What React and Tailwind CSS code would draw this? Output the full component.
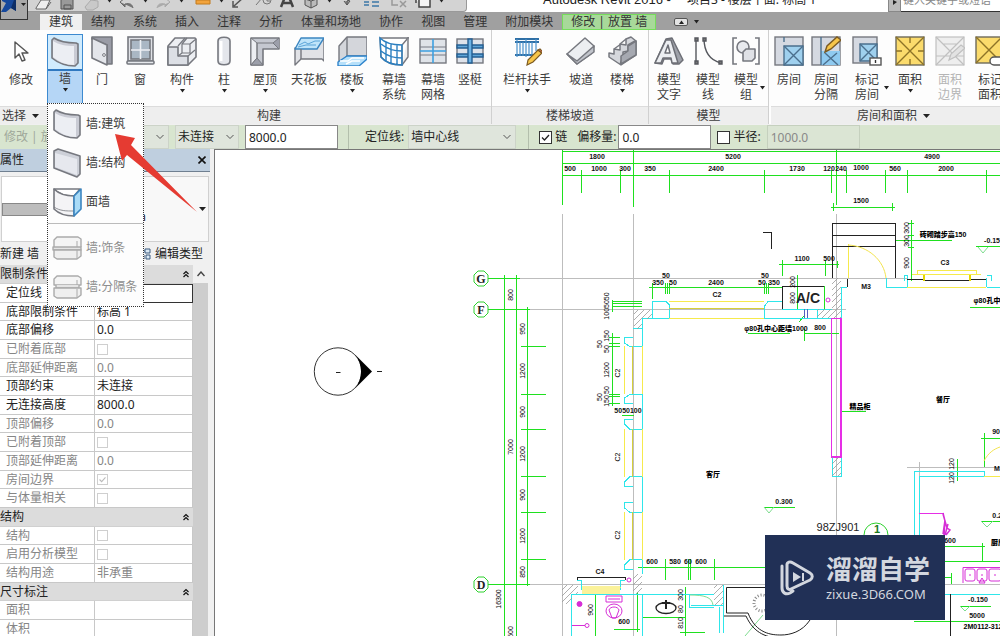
import React from "react";

const G = "#76787f";

const icons = {
  cursor: (
    <path d="M9 6v16l4-4 3 7 3-1-3-7h6z" fill="#fff" stroke="#555" strokeWidth="1.4" strokeLinejoin="round" />
  ),
  wall: (
    <g stroke={G} strokeWidth="1.6" strokeLinejoin="round">
      <path d="M2 3l2-2c6 4 12 5 22 5l2 1v19l-3 3c-9 0-17-3-23-8z" fill="#c9cbd4" />
      <path d="M3 4c6 4 13 5 21 5v19C16 28 9 25 3 20z" fill="#eceef3" stroke="none" />
    </g>
  ),
  wallFlat: (
    <g stroke={G} strokeWidth="1.6" strokeLinejoin="round">
      <path d="M2 3l4-2 22 7v18l-3 3-23-9z" fill="#cdd0d8" />
      <path d="M3 5l22 6v16L3 19z" fill="#e6e8ee" stroke="none" />
    </g>
  ),
  wallFace: (
    <g stroke={G} strokeWidth="1.6" strokeLinejoin="round">
      <path d="M2 2h26l-6 7C14 9 6 7 2 2z" fill="#fff" />
      <path d="M2 2c5 5 12 7 20 7v20c-9 0-15-2-20-7z" fill="#f4f4f6" />
      <path d="M2 20c6 4 12 4 20 4" fill="none" strokeWidth="0.8" />
      <path d="M22 9l7-7v20l-7 7z" fill="#a9dbf7" stroke="#3b85c0" />
    </g>
  ),
  sweep: (
    <g stroke="#aaa" strokeWidth="1.4" strokeLinejoin="round">
      <path d="M2 14V7l3-3h21l3 2v8" fill="#f4f4f4" />
      <path d="M1 14h28v3H1z" fill="#e4e4e4" />
      <path d="M2 17h27v6l-4 3H5l-3-2z" fill="#efefef" />
      <path d="M25 8v6M25 17v9" fill="none" strokeWidth="1" />
    </g>
  ),
  reveal: (
    <g stroke="#aaa" strokeWidth="1.4" strokeLinejoin="round">
      <path d="M2 13V7l3-3h21l3 2v7H2z" fill="#f4f4f4" />
      <path d="M4 13v3h23v-3" fill="#e4e4e4" />
      <path d="M2 16h27v7l-4 3H5l-3-2z" fill="#efefef" />
      <path d="M25 8v5M25 17v9" fill="none" strokeWidth="1" />
    </g>
  ),
  door: (
    <g stroke={G} strokeWidth="1.6" strokeLinejoin="round">
      <path d="M5 1h20v27h-5V9L5 3z" fill="#9a9ca6" />
      <path d="M5 2l15 7v20L5 22z" fill="#e3e5ea" />
      <circle cx="17" cy="19" r="1.4" fill="#fff" strokeWidth="1" />
    </g>
  ),
  window: (
    <g stroke={G} strokeWidth="1.6">
      <rect x="3" y="1" width="25" height="24" fill="#dfe1e6" />
      <rect x="6" y="4" width="19" height="19" fill="#aab7c4" />
      <path d="M15.500 4v19M6 14h19" stroke="#eef0f4" />
      <rect x="2" y="25" width="27" height="3" rx="1" fill="#e6e8ec" />
    </g>
  ),
  component: (
    <g stroke={G} strokeWidth="1.6" strokeLinejoin="round">
      <path d="M1 10L8 2h20l1 1v18l-8 8H1z" fill="#eceef2" />
      <path d="M1 11h10v9h10v9H1z" fill="#dcdfe5" />
      <path d="M11 10l7-8M11 20l4-3V8h8v9h-8M15 8l5-6M23 8l6-5M21 20l7-6" fill="none" strokeWidth="1.200" />
    </g>
  ),
  column: (
    <g stroke={G} strokeWidth="1.600">
      <path d="M9 5c0-5 12-5 12 0v20c0 5-12 5-12 0z" fill="#e4e6eb" />
      <path d="M12 5v20" stroke="#fff" strokeWidth="3" />
    </g>
  ),
  roof: (
    <g stroke={G} strokeWidth="1.600" strokeLinejoin="round">
      <path d="M1 2h28v11H13v16H1z" fill="#c5c8d0" />
      <path d="M1 2l6 5v15l-6 7z" fill="#eceef2" strokeWidth="1" />
      <path d="M7 22l6 7H1zM7 7h16M29 2l-6 5 6 6M7 7v15" fill="#9c9faa" strokeWidth="1" />
    </g>
  ),
  ceiling: (
    <g stroke={G} strokeWidth="1.400" strokeLinejoin="round">
      <path d="M1 12v17l6-6h21l2 2V3z" fill="#e1e2e6" />
      <path d="M7 2h23l-7 11H1z" fill="#bfe4fa" stroke="#3b85c0" />
      <path d="M5 9l6-3 3 2 7-3h5M4 11l8-2h10" fill="none" stroke="#5ba4d8" strokeWidth="1" />
      <path d="M7 13v10" />
    </g>
  ),
  floor: (
    <g stroke={G} strokeWidth="1.400" strokeLinejoin="round">
      <path d="M2 10l8-9h20v19H10L2 28z" fill="#d4d6db" />
      <path d="M10 1v19" />
      <path d="M10 20h20v3l-8 7H1v-4z" fill="#b6e0fa" stroke="#2f84cc" />
      <path d="M3 25h8l4-3h12M9 28l6-3h8" fill="none" stroke="#fff" />
    </g>
  ),
  curtainSystem: (
    <g strokeWidth="1.400">
      <path d="M1 2h28L23 9v20C14 29 6 26 2 21z" fill="#fff" stroke={G} />
      <path d="M29 1v20l-6 8" fill="#eee" stroke={G} />
      <path d="M1 2c5 5 13 7 22 7v20C14 29 6 26 2 21zM2 8c6 5 13 7 21 7M2 15c6 5 13 7 21 7M7 6v19M12 8v19M18 9v20" fill="none" stroke="#2b7fc0" />
    </g>
  ),
  curtainGrid: (
    <g strokeWidth="1.400">
      <rect x="2" y="3" width="26" height="24" fill="#dfe3e8" stroke={G} />
      <path d="M2 11h26M2 19h26" stroke="#777b84" strokeWidth="1" />
      <path d="M15 3v24M2 15h26" stroke="#3ea0e0" strokeWidth="1.600" />
    </g>
  ),
  mullion: (
    <g strokeWidth="1.400">
      <rect x="2" y="3" width="26" height="24" fill="#dde2ea" stroke={G} />
      <path d="M2 9h26v3H2zM2 18h26v3H2z" fill="#5fa6d8" stroke="#245f92" />
      <path d="M13 3h4v24h-4z" fill="#6cb2e4" stroke="#245f92" />
    </g>
  ),
  railing: (
    <g strokeWidth="1.200">
      <path d="M3 3h24M3 6h24M3 19h19" stroke="#2f6fa5" strokeWidth="2" />
      <path d="M5 3v18M8 6v14M11 6v14M14 3v18M17 6v14M20 6v14M24 3v12" stroke="#4a92cc" />
      <path d="M16 24l10-10 4 3-9 9-6 3z" fill="#f7c64a" stroke="#7b5a22" />
      <path d="M26 14l2-1 3 3-1 1z" fill="#e06a5a" stroke="#7b5a22" />
    </g>
  ),
  ramp: (
    <g stroke={G} strokeWidth="1.500" strokeLinejoin="round">
      <path d="M1 18L19 2l9 8-3 8-14 10z" fill="#eceef1" />
      <path d="M1 18l10 7L28 10v6L11 28z" fill="#c1c4cb" />
    </g>
  ),
  stair: (
    <g stroke={G} strokeWidth="1.500" strokeLinejoin="round">
      <path d="M2 17l5 1v-5l6 1V8l6 1V3l5-2 5 4v14L14 29 2 21z" fill="#d5d7dc" />
      <path d="M13 28l3-7 0-5 5-1v-6l7-4M7 13l7-5M13 8l6-5" fill="none" />
      <path d="M14 28V20l7-5v-5l8-5v14z" fill="#a6a9b1" />
    </g>
  ),
  modelText: (
    <g stroke="#6d6f76" strokeWidth="1.500" strokeLinejoin="round">
      <path d="M1 27L12 3l6-1 11 22-4 4h-6l-2-5h-7l-2 5z" fill="#9ea1a9" />
      <path d="M1 27L12 4h5l7 23h-6l-1-5H9l-2 5z" fill="#eceef1" />
      <path d="M11 17h5l-2-8z" fill="#fff" />
    </g>
  ),
  modelLine: (
    <g stroke="#55575d" strokeWidth="1.400" fill="none">
      <path d="M3 3v24M11 2c0 14 5 22 17 25" />
      <path d="M2 2h3v3H2zM2 25h3v3H2zM10 2h3v3h-3zM26 25h3v3h-3z" fill="#777" />
    </g>
  ),
  modelGroup: (
    <g stroke={G} strokeWidth="1.600">
      <path d="M6 2H2v26h4M24 2h4v26h-4" fill="none" />
      <circle cx="12" cy="11" r="6" fill="#e8eaee" />
      <path d="M12 16l3-3h9v9l-3 3h-9z" fill="#dfe1e6" strokeLinejoin="round" />
    </g>
  ),
  room: (
    <g strokeWidth="1.400">
      <rect x="1" y="1" width="28" height="28" fill="#d5d9e1" stroke={G} />
      <path d="M10 10h19v19H10z" fill="#9fd0ee" stroke="#4b6f8d" />
      <path d="M10 10l19 19M29 10L10 29M10 1v5" stroke="#4b6f8d" />
    </g>
  ),
  roomSeparator: (
    <g strokeWidth="1.400">
      <rect x="1" y="1" width="28" height="28" fill="#d5d9e1" stroke={G} />
      <path d="M10 15h19v14H10z" fill="#8fcaf0" />
      <path d="M10 1v28M12 29l14-12M14 17l13 12" stroke="#4b6f8d" />
      <path d="M14 16l2-6L26 1l4 3-10 9z" fill="#f7c64a" stroke="#7b5a22" />
    </g>
  ),
  roomTag: (
    <g strokeWidth="1.400">
      <rect x="1" y="1" width="24" height="26" fill="#d5d9e1" stroke={G} />
      <path d="M8 8h17v17H8z" fill="#9fd0ee" stroke="#4b6f8d" />
      <path d="M8 8l17 17M25 8L8 25" stroke="#4b6f8d" />
      <rect x="18" y="22" width="11" height="7" fill="#fff" stroke="#555" />
      <path d="M23.500 24v3" stroke="#333" />
    </g>
  ),
  area: (
    <g strokeWidth="1.400" stroke="#8d7327">
      <rect x="1" y="1" width="28" height="28" fill="#fbdb6c" stroke="#6d6a5a" />
      <path d="M1 1l28 28M29 1L1 29M15 1v6M1 15h6M15 29v-6M29 15h-6" />
    </g>
  ),
  areaBoundary: (
    <g strokeWidth="1.200" stroke="#c0c0c0">
      <rect x="1" y="1" width="28" height="28" fill="#eee" />
      <path d="M1 1l28 28M29 1L1 29M8 8h14M1 20h28" />
      <path d="M14 24l2-6 10-9 4 3-10 9z" fill="#e2e2e2" />
    </g>
  ),
  areaTag: (
    <g strokeWidth="1.400" stroke="#8d7327">
      <rect x="1" y="1" width="26" height="26" fill="#fbdb6c" stroke="#6d6a5a" />
      <path d="M1 1l26 26M27 1L1 27" />
      <rect x="15" y="21" width="14" height="8" rx="4" fill="#fff" stroke="#555" />
    </g>
  ),
};

function Icon({ name }) {
  return (
    <svg className="block h-[30px] w-[30px] shrink-0" viewBox="0 0 30 30" fill="none" aria-hidden="true">
      {icons[name]}
    </svg>
  );
}

function Caret({ className = "" }) {
  return (
    <svg className={"block h-1 w-[5px] " + className} viewBox="0 0 5 4" aria-hidden="true">
      <path d="M0 0h5L2.500 3.500z" fill="#222" />
    </svg>
  );
}

function RibbonButton({ icon, lines, width, caret, disabled, side }) {
  return (
    <button
      type="button"
      disabled={disabled}
      className={"relative flex shrink-0 flex-col items-center pt-1.5 " + width + (disabled ? " text-[#b5b5b5]" : " text-[#3c3c3c]")}
    >
      <Icon name={icon} />
      <span className="mt-1.5 flex flex-col items-center leading-[15px] whitespace-nowrap">
        {lines.map((l) => (
          <span key={l}>{l}</span>
        ))}
      </span>
      {caret && <Caret className="mt-0.5" />}
      {side && <Caret className="absolute right-0 bottom-4" />}
    </button>
  );
}

function Panel({ title, children, className = "", arrow }) {
  return (
    <section className={"flex shrink-0 flex-col border-r border-[#d0d0d0] " + className}>
      <div className="flex h-[76px] bg-[#fdfdfd]">{children}</div>
      <h2 className="flex h-[18px] items-center justify-center gap-1.5 border-t border-[#dcdcdc] bg-[#eeeeee] text-[#3c3c3c]">
        {title}
        {arrow && (
          <svg className="h-1 w-[7px]" viewBox="0 0 7 4" aria-hidden="true">
            <path d="M0 0h7L3.500 4z" fill="#222" />
          </svg>
        )}
      </h2>
    </section>
  );
}

function MenuItem({ icon, label, disabled }) {
  return (
    <button
      type="button"
      role="menuitem"
      disabled={disabled}
      className={"flex h-[39px] w-full items-center gap-1 pl-1 text-left whitespace-nowrap " + (disabled ? "text-[#8d8d8d]" : "text-[#3c3c3c]")}
    >
      <Icon name={icon} />
      {label}
    </button>
  );
}

function WallButton() {
  return (
    <div className="relative mt-1 h-[70px] w-9 shrink-0">
      <button type="button" aria-haspopup="menu" aria-expanded="true" className="flex h-full w-full flex-col items-center border border-[#3c8ad0] bg-[#b5d6f6] text-[#3c3c3c]">
        <span className="flex h-9 w-full shrink-0 items-center justify-center border-b-2 border-[#2f78c0] bg-[#d0ebfd]">
          <Icon name="wall" />
        </span>
        <span className="leading-[15px]">墙</span>
        <Caret className="mt-0.5" />
      </button>
      <div role="menu" className="absolute top-[69px] left-0 z-20 w-[97px] border border-dotted border-[#333] bg-[#fdfdfd]">
        <MenuItem icon="wall" label="墙:建筑" />
        <MenuItem icon="wallFlat" label="墙:结构" />
        <MenuItem icon="wallFace" label="面墙" />
        <div className="mb-1 border-b border-[#bbb] pt-0.5" />
        <MenuItem icon="sweep" label="墙:饰条" disabled />
        <MenuItem icon="reveal" label="墙:分隔条" disabled />
      </div>
      <svg className="absolute top-[98px] left-[66px] z-30 h-20 w-[86px]" viewBox="0 0 86 80" aria-hidden="true">
        <path d="M2 2l20 4-4 7 66 67L14 23l-5 6z" fill="#e53b32" />
      </svg>
    </div>
  );
}

const quick = [
  ["打开", <path key="a" d="M2 9l5-8h9l-4 9H2zM12 10l5-7" fill="#eee" stroke="#666" />],
  ["保存", <path key="a" d="M3 0h12v10H3zM6 6h7v4H6z" fill="#9a9a9a" stroke="#555" />],
  ["同步", <path key="a" d="M3 8l6-7 7 1v6l-5 3H5z" fill="#c9c9c9" stroke="#aaa" />],
  "caret",
  ["放弃", <path key="a" d="M2 3l5 5V5c5-1 7 0 8 4M2 3l5-4" fill="#777" stroke="#666" />],
  "caret",
  ["重做", <path key="a" d="M16 3l-5 5V5C6 4 4 5 3 9M16 3l-5-4" fill="#aaa" stroke="#aaa" />],
  "caret",
  "gap",
  ["测量", <path key="a" d="M2 1h14v4H2z" fill="#f2a33c" stroke="#c27a1c" />],
  "caret",
  ["尺寸标注", <path key="a" d="M4 7L14-2M3 2v6h5" fill="none" stroke="#555" strokeWidth="1.500" />],
  ["标记", <path key="a" d="M2 6l6-7M13-3a4 4 0 1 1 0 8 4 4 0 1 1 0-8M13-1v3h3" fill="none" stroke="#777" />],
  ["文字", <path key="a" d="M3 8L9-7l6 15M5 4h8" fill="none" stroke="#444" strokeWidth="2.500" />],
  ["三维视图", <path key="a" d="M3 0l6 2 6-2v6l-6 3-6-3zM9 2v7" fill="#bbb" stroke="#555" />],
  "caret",
  ["剖面", <path key="a" d="M9-6a4 4 0 1 1 0 8M9 2v4M6 2l3 4 3-4" fill="#999" stroke="#555" />],
  ["细线", <path key="a" d="M2 0h5M2 6h5M10-1h7M10 3h7M10 7h7M2 3h5" fill="none" stroke="#3c78a8" strokeWidth="1.500" />],
  "gap",
  ["关闭隐藏窗口", <path key="a" d="M2-2v8h6M10 2l6 6M16 2l-6 6" fill="none" stroke="#999" strokeWidth="1.500" />],
  ["切换窗口", <path key="a" d="M5 0h11v8H5zM2 4V-1h4" fill="#f4f4f4" stroke="#444" strokeWidth="1.500" />],
  "caret",
];

const tabs = ["建筑", "结构", "系统", "插入", "注释", "分析", "体量和场地", "协作", "视图", "管理", "附加模块"];

function Header() {
  return (
    <header className="relative shrink-0">
      <div className="flex h-3 items-end overflow-hidden bg-white">
        <div className="flex h-3 w-[467px] shrink-0 items-end overflow-hidden rounded-br border-r border-b border-[#999] bg-[#d3d3d3] pl-[31px]">
          {quick.map((q, i) =>
            q === "caret" ? (
              <span key={i} className="flex h-3 w-3 items-start justify-center">
                <Caret />
              </span>
            ) : q === "gap" ? (
              <span key={i} className="w-1" />
            ) : (
              <button key={i} type="button" aria-label={q[0]} className="flex h-3 w-6 items-end justify-center">
                <svg className="h-3 w-[18px]" viewBox="0 0 18 12">{q[1]}</svg>
              </button>
            )
          )}
        </div>
        <div className="flex flex-1 justify-start gap-4 overflow-hidden pl-[76px] leading-6 whitespace-pre text-[#222]">
          <span className="font-['Liberation_Sans',sans-serif] text-[13px]">Autodesk Revit 2016 -</span>
          <span>项目3 - 楼层平面: 标高 1</span>
        </div>
        <button type="button" aria-label="展开搜索" className="flex h-3 w-[13px] shrink-0 items-start justify-center border border-t-0 border-[#888] bg-[#bbb]">
          <svg className="h-1.5 w-1.5" viewBox="0 0 6 6"><path d="M1 0l4 2-4 3z" fill="#222" /></svg>
        </button>
        <div className="flex h-3 w-[99px] shrink-0 items-end overflow-hidden border-b border-[#333] bg-white">
          <input aria-label="搜索" placeholder="键入关键字或短语" className="h-6 w-full bg-transparent px-0.5 text-[11px] text-[#888] placeholder:text-[#888]" />
        </div>
      </div>
      <nav className="flex h-[18px] items-end bg-[#a0a0a0] pl-10 text-[#333]">
        {tabs.map((t, i) => (
          <button key={t} type="button" className={"h-4 shrink-0 px-[9px] leading-4 whitespace-nowrap " + (i === 0 ? "bg-[#f0f0f0]" : "")}>
            {t}
          </button>
        ))}
        <button type="button" className="h-4 shrink-0 border border-[#76dd5c] bg-[#a8d99a] px-2 leading-3.5 whitespace-pre">
          修改 | 放置 墙
        </button>
        <button type="button" aria-label="最小化功能区" className="mb-1 ml-[18px] flex items-center gap-1.5">
          <span className="flex h-2 w-3.5 items-center justify-center rounded-xs border border-[#555] bg-[#e4e4e4]">
            <Caret className="rotate-180" />
          </span>
          <Caret />
        </button>
      </nav>
      <button type="button" aria-label="应用程序菜单" className="absolute top-0 left-0 z-10 flex h-5 w-7 items-start border border-t-0 border-[#333] bg-[#a9a9a9]">
        <svg className="h-[18px] w-[26px]" viewBox="0 0 26 18">
          <path d="M1 0h14v11L10 8l-5 4H0L5 3 1 1z" fill="#15489c" />
          <path d="M15 0v11l-5-3 3-8z" fill="#0c2d66" />
          <path d="M20 3h5l-2.500 3z" fill="#222" />
        </svg>
      </button>
    </header>
  );
}

function Ribbon() {
  return (
    <div className="flex shrink-0 bg-[#fdfdfd]">
      <section className="flex w-[47px] shrink-0 flex-col">
        <div className="flex h-[76px]">
          <RibbonButton icon="cursor" lines={["修改"]} width="w-[42px]" />
        </div>
        <button type="button" className="flex h-[18px] items-center gap-1.5 border-t border-[#dcdcdc] bg-[#eeeeee] pl-0.5 whitespace-nowrap text-[#3c3c3c]">
          选择
          <svg className="h-1 w-[7px] shrink-0" viewBox="0 0 7 4" aria-hidden="true">
            <path d="M0 0h7L3.500 4z" fill="#222" />
          </svg>
        </button>
      </section>
      <Panel title="构建" className="w-[445px]">
        <WallButton />
        <RibbonButton icon="door" lines={["门"]} width="w-[38px]" />
        <RibbonButton icon="window" lines={["窗"]} width="w-[38px]" />
        <RibbonButton icon="component" lines={["构件"]} width="w-[46px]" caret />
        <RibbonButton icon="column" lines={["柱"]} width="w-[38px]" caret />
        <RibbonButton icon="roof" lines={["屋顶"]} width="w-11" caret />
        <RibbonButton icon="ceiling" lines={["天花板"]} width="w-11" />
        <RibbonButton icon="floor" lines={["楼板"]} width="w-[42px]" caret />
        <RibbonButton icon="curtainSystem" lines={["幕墙", "系统"]} width="w-[42px]" />
        <RibbonButton icon="curtainGrid" lines={["幕墙", "网格"]} width="w-9" />
        <RibbonButton icon="mullion" lines={["竖梃"]} width="w-[38px]" />
      </Panel>
      <Panel title="楼梯坡道" className="w-[157px]">
        <RibbonButton icon="railing" lines={["栏杆扶手"]} width="w-[70px]" caret />
        <RibbonButton icon="ramp" lines={["坡道"]} width="w-[38px]" />
        <RibbonButton icon="stair" lines={["楼梯"]} width="w-11" caret />
      </Panel>
      <Panel title="模型" className="w-[120px]">
        <RibbonButton icon="modelText" lines={["模型", "文字"]} width="w-10" />
        <RibbonButton icon="modelLine" lines={["模型", "线"]} width="w-[38px]" />
        <RibbonButton icon="modelGroup" lines={["模型", "组"]} width="w-[38px]" side />
      </Panel>
      <Panel title="房间和面积" className="w-[248px] pl-0.5" arrow>
        <RibbonButton icon="room" lines={["房间"]} width="w-9" />
        <RibbonButton icon="roomSeparator" lines={["房间", "分隔"]} width="w-[38px]" />
        <RibbonButton icon="roomTag" lines={["标记", "房间"]} width="w-11" side />
        <RibbonButton icon="area" lines={["面积"]} width="w-[42px]" caret />
        <RibbonButton icon="areaBoundary" lines={["面积", "边界"]} width="w-[38px]" disabled />
        <RibbonButton icon="areaTag" lines={["标记", "面积"]} width="w-[42px]" side />
      </Panel>
    </div>
  );
}

function Select({ id, label, value, options, width }) {
  return (
    <span className={"relative flex h-6 items-center border border-[#ccd3c8] bg-[#dfe5dc] " + width}>
      <select id={id} aria-label={label} defaultValue={value} className="h-full w-full appearance-none bg-transparent pl-0.5 text-[#222] outline-none">
        {options.map((o) => (
          <option key={o}>{o}</option>
        ))}
      </select>
      <svg className="pointer-events-none absolute right-1 h-1.5 w-2" viewBox="0 0 8 6" aria-hidden="true">
        <path d="M0.500 1l3.500 3.500L7.500 1" fill="none" stroke="#555" />
      </svg>
    </span>
  );
}

function Check({ id, label, checked, muted }) {
  return (
    <span className={"relative block shrink-0 " + (muted ? "h-[11px] w-[11px]" : "h-[13px] w-[13px]")}>
      <input
        id={id}
        type="checkbox"
        aria-label={label}
        defaultChecked={checked}
        disabled={muted}
        className={"block h-full w-full appearance-none border bg-white " + (muted ? "border-[#cfcfcf]" : "border-[#333]")}
      />
      {checked && (
        <svg className="pointer-events-none absolute inset-0" viewBox="0 0 13 13" aria-hidden="true">
          <path d="M3 6.500l2.500 2.500L10 4" fill="none" stroke={muted ? "#bbb" : "#222"} strokeWidth="1.300" />
        </svg>
      )}
    </span>
  );
}

function OptionsBar() {
  return (
    <form className="mt-px flex h-[24px] shrink-0 items-center bg-[#d8e5cf] text-[#222]">
      <div className="flex w-[169px] shrink-0 items-center gap-2 pl-1">
        <span className="whitespace-pre text-[#9fa89a]">修改 | 放置 墙</span>
        <Select label="标高" value="高度" options={["高度", "深度"]} width="flex-1" />
      </div>
      <span className="ml-1.5"><Select label="高度" value="未连接" options={["未连接", "标高 2"]} width="w-16" /></span>
      <input aria-label="无连接高度" defaultValue="8000.0" className="ml-1.5 h-6 w-[93px] border border-[#888] bg-white px-[3px] outline-none" />
      <span className="ml-2.5 h-6 border-l border-[#b3bfac]" />
      <label htmlFor="locline" className="ml-4 shrink-0">定位线:</label>
      <span className="ml-1"><Select id="locline" value="墙中心线" options={["墙中心线", "核心层中心线"]} width="w-[108px]" /></span>
      <span className="ml-3 h-6 border-l border-[#b3bfac]" />
      <span className="ml-2.5"><Check id="chain" label="链" checked /></span>
      <label htmlFor="chain" className="ml-[3px] shrink-0">链</label>
      <label htmlFor="offset" className="ml-2.5 shrink-0">偏移量:</label>
      <input id="offset" defaultValue="0.0" className="ml-0.5 h-6 w-[93px] border border-[#888] bg-white px-[3px] outline-none" />
      <span className="ml-1.5"><Check id="radius" label="半径" /></span>
      <label htmlFor="radius" className="ml-[3px] shrink-0">半径:</label>
      <input aria-label="半径值" disabled defaultValue="1000.0" className="ml-1.5 h-6 w-[93px] border border-[#c5d0be] bg-[#dbe5d4] px-[3px] text-[#888]" />
    </form>
  );
}

const rows = [
  { head: "限制条件" },
  { name: "定位线", value: "", focus: true },
  { name: "底部限制条件", value: "标高 1" },
  { name: "底部偏移", value: "0.0" },
  { name: "已附着底部", check: true, muted: true },
  { name: "底部延伸距离", value: "0.0", muted: true },
  { name: "顶部约束", value: "未连接" },
  { name: "无连接高度", value: "8000.0" },
  { name: "顶部偏移", value: "0.0", muted: true },
  { name: "已附着顶部", check: true, muted: true },
  { name: "顶部延伸距离", value: "0.0", muted: true },
  { name: "房间边界", check: true, checked: true, muted: true },
  { name: "与体量相关", check: true, muted: true },
  { head: "结构" },
  { name: "结构", check: true, muted: true },
  { name: "启用分析模型", check: true, muted: true },
  { name: "结构用途", value: "非承重", muted: true },
  { head: "尺寸标注" },
  { name: "面积", value: "", muted: true },
  { name: "体积", value: "", muted: true },
];

function Properties() {
  return (
    <aside className="flex w-[210px] shrink-0 flex-col overflow-hidden bg-[#f0f0f0] text-[#222]">
      <div className="flex h-[23px] shrink-0 items-center justify-between border-b border-[#6f7f90] bg-[#bfcfdf] pr-1">
        <h2>属性</h2>
        <button type="button" aria-label="关闭">
          <svg className="h-2 w-2" viewBox="0 0 8 8"><path d="M0.500 0.500l7 7M7.500 0.500l-7 7" stroke="#111" strokeWidth="1.600" /></svg>
        </button>
      </div>
      <button type="button" aria-label="类型选择器" className="mx-px mt-1 flex h-[66px] shrink-0 items-center border border-[#d0d0d0] bg-[#f8f8f8] pr-0.5">
        <span className="flex h-full w-12 items-center bg-white">
          <span className="h-[13px] w-full border border-[#888] bg-[#bdbdbd]" />
        </span>
        <span className="mt-4 flex-1 pr-[53px] text-right">mm</span>
        <svg className="h-1 w-[7px]" viewBox="0 0 7 4"><path d="M0 0h7L3.500 4z" fill="#222" /></svg>
      </button>
      <div className="flex h-[23px] shrink-0 items-center justify-between pr-[7px]">
        <span>新建 墙</span>
        <button type="button" className="flex items-center gap-1">
          <svg className="h-3 w-3" viewBox="0 0 12 12"><path d="M6 1h5v4H6zM1 7h4v4H1zM7 7h4v4H7zM3 7V3h3" fill="#dbe9f5" stroke="#3c5c80" /></svg>
          编辑类型
        </button>
      </div>
      <div className="flex min-h-0 flex-1 overflow-hidden">
        <div className="w-[193px] overflow-hidden">
          <table className="w-full table-fixed border-separate border-spacing-0 bg-white leading-4">
            <colgroup>
              <col className="w-[95px]" />
              <col />
            </colgroup>
            <tbody>
              {rows.map((r, i) =>
                r.head ? (
                  <tr key={i} className="h-[19px] nth-[3n]:h-[18px]">
                    <th colSpan={2} className="border-b border-[#d0d0d0] bg-[#dcdcdc] p-0 text-left font-normal">
                      <span className="flex items-center justify-between pr-1">
                        {r.head}
                        <svg className="h-2 w-1.5" viewBox="0 0 6 8"><path d="M0.500 4L3 1.500 5.500 4M0.500 7L3 4.500 5.500 7" fill="none" stroke="#111" strokeWidth="1.200" /></svg>
                      </span>
                    </th>
                  </tr>
                ) : (
                  <tr key={i} className={"h-[19px] nth-[3n]:h-[18px] " + (r.muted ? "text-[#868686]" : "text-[#222]")}>
                    <th className="overflow-hidden border-r border-b border-[#c8c8c8] py-0 pr-0 pl-1.5 text-left font-normal whitespace-nowrap">{r.name}</th>
                    <td className={"py-0 pr-0 pl-0.5 " + (r.focus ? "border border-[#333]" : "border-r border-b border-[#c8c8c8]")}>
                      {r.check ? <Check label={r.name} checked={r.checked} muted /> : r.value}
                    </td>
                  </tr>
                )
              )}
            </tbody>
          </table>
        </div>
        <div className="flex w-[15px] flex-col bg-[#cdcdcd]">
          <span className="flex h-[18px] items-center justify-center bg-[#f0f0f0]">
            <svg className="h-1.5 w-2" viewBox="0 0 8 6"><path d="M0.500 5L4 1l3.500 4" fill="none" stroke="#444" strokeWidth="1.400" /></svg>
          </span>
        </div>
      </div>
    </aside>
  );
}

/* Dimension strings and labels of the floor plan: text, x, y */
const dims = [
  ["1800", 597, 159], ["5200", 733, 159], ["4900", 932, 159],
  ["500", 570, 171], ["1000", 599, 171], ["300", 625, 171], ["350", 650, 171], ["2400", 716, 171],
  ["1730", 797, 171], ["120", 829, 171], ["240", 841, 171], ["1000", 861, 170], ["560", 895, 171], ["2000", 946, 171],
  ["1500", 861, 203], ["1100", 802, 261], ["500", 829, 261],
  ["350", 658, 285], ["50", 673, 285], ["50", 666, 278], ["2400", 716, 285], ["50", 762, 285], ["350", 774, 285], ["50", 765, 278],
  ["C2", 717, 297], ["C3", 945, 265], ["M3", 866, 289], ["800", 820, 330], ["5050100", 628, 413],
  ["C4", 600, 574], ["600", 624, 624], ["600", 652, 564], ["580", 675, 564], ["60", 688, 564], ["600", 701, 564],
  ["0.300", 784, 504], ["-0.150", 994, 243], ["900", 998, 434], ["M-1", 1000, 471], ["0.200", 1001, 518],
  ["600", 950, 543], ["-0.150", 978, 602], ["5000", 977, 618],
];

const vertical = [
  ["800", 510, 295], ["950", 522, 329], ["1200", 522, 371], ["900", 522, 412], ["1200", 522, 454], ["900", 522, 495],
  ["1200", 522, 536], ["850", 522, 572], ["7000", 510, 447], ["16300", 498, 599], ["500", 510, 632],
  ["150", 606, 336], ["50", 606, 349], ["50", 599, 344], ["1200", 606, 370], ["50", 606, 390], ["50", 599, 397], ["150", 606, 401],
  ["1005050", 606, 306], ["C2", 617, 373], ["C2", 617, 457], ["C2", 617, 535],
  ["300", 906, 228], ["300", 906, 241], ["900", 906, 263], ["200", 792, 282], ["800", 792, 298],
  ["900", 590, 610], ["300", 680, 595], ["80", 680, 609], ["810", 680, 623], ["120", 951, 464], ["120", 951, 478],
];

const notes = [
  ["砖砌踏步高150", 943, 237], ["φ80孔中心距墙1000", 776, 331], ["φ80孔中心距", 994, 303], ["精品柜", 860, 409],
  ["餐厅", 943, 402], ["客厅", 713, 477], ["厨房", 998, 545], ["2M0112-312", 983, 629],
];

function Plan() {
  return (
    <svg
      role="img"
      aria-label="楼层平面: 标高 1"
      className="block h-[486px] w-[786px] shrink-0 bg-white font-['Liberation_Sans','Noto_Sans_CJK_SC',sans-serif]"
      viewBox="215 150 786 486"
      fill="none"
    >
      <defs>
        <pattern id="hatch" width="6" height="6" patternUnits="userSpaceOnUse">
          <path d="M0 6L6 0" stroke="#999" strokeWidth="0.800" />
        </pattern>
      </defs>
      <g shapeRendering="crispEdges">
        <path stroke="#bdbdbd" d="M562.500 214V636M633.500 214V636M836.500 214V636M488 278.500H908M488 309.500H846M488 584.500H765M907 467.500H1000M919.500 462V476M945 584.500H1000" />
        <path
          stroke="#1fe01f"
          d="M562 151.500H1000M562 163.500H1000M562 175.500H1000M562.500 150V205M633.500 150V207M836.500 150V205
          M581.500 170V193M620.500 170V193M669.500 170V193M764.500 170V193M831.500 170V193M846.500 170V193M885.500 170V193M907.500 170V193M986.500 170V193
          M831 207.500H895M833.500 203V211M892.500 203V211
          M504.500 275V636M516.500 275V636M527.500 307V586M488 278.500H520M488 309.500H530M488 584.500H530
          M521 346.500H546M521 394.500H546M521 429.500H546M521 476.500H546M521 512.500H546M521 559.500H546
          M612.500 300V312M612.500 333V406M609 337.500H620M609 343.500H620M609 346.500H620M609 394.500H620M609 396.500H620M609 403.500H620
          M613 301.500H642M613 303.500H642M613 306.500H642
          M649 287.500H782M652.500 283V299M665.500 283V294M667.500 283V294M669.500 283V294M764.500 283V294M766.500 283V294M768.500 283V294
          M779 264.500H839M782.500 260V276M825.500 260V276M837.500 261V268M797.500 275V310M824.500 286V309
          M911.500 220V281M908 223.500H914M908 235.500H914M908 247.500H914M895 240.500H952
          M976 246.500H1000M748 333.500H790M804 333.500H839M804.500 329V341M805 315L799 322M970 307.500H1000
          M622 415.500H634M842 411.500H866M764 507.500H795M638 567.500H765M665.500 559V580M688.500 559V580M690.500 559V580M714.500 559V580
          M595.500 592V636M614 629.500H640M685.500 587V636M642 617.500H686M680 632.500H705M637.500 592V632
          M957.500 459V481M937 471.500H975M937 476.500H975M981 438.500H1000M984.500 433V467M981 521.500H1000
          M945 546.500H985M982.500 543V561M945 561.500H1000M945 577.500H952M951.500 573V584M960 606.500H991M914 621.500H1000"
        />
        <path
          stroke="#2fe6ea"
          d="M652.500 301.500H666L669.500 305V318.500H642.500V346.500H630L624.500 343V337.500H633M652.500 301V318M633 328.500H642
          M633 403.500H624.500V398L630 394.500H642.500V429.500H630L624.500 424V419.500H633
          M633 486.500H624.500V482L630 476.500H642.500V512.500H630L624.500 508V502.500H633M633 569.500H624.500V565L630 559.500H642.500V574M642.500 594V636
          M782 301.500H768L764.500 306V318.500H841M782 309.500H832M817.500 309V318M841.500 318V287.500H847
          M886.500 278V287.500H907.500V275H904V281M986.500 287.500H1000M986.500 278V287M987 275.500H991V281
          M832.500 457V476.500H841.500V457M571.500 636V594.500H642M577 580.500H581V590M625 580.500H620V590M642 594.500H714
          M689.500 594V607H714M691 605.500H723M719.500 607V633M723.500 585V633M945 594.500H1000
          M914.500 535V471.500H984V476.500H919.500V535"
        />
        <path
          stroke="#f6ea4c"
          d="M669 301.500H764M669 318.500H764M624.500 346V394M642.500 346V394M624.500 429V477M642.500 429V477M624.500 512V560M642.500 512V560
          M907 287.500H986M917.500 275V270.500H976.500V275M912 274.500H981M848.500 244V278M984 476.500H1000M582 587.500H621"
        />
        <path fill="#fbf29a" d="M582 586h38v8h-38z" />
        <path stroke="#d6cf3a" d="M669 308.500H764M632.500 346V394M632.500 429V477M632.500 512V560" />
        <path stroke="#222" d="M832.500 278V223.500H895.500V278M832 235.500H895M832 246.500H895M782.500 309V286.500H824M763 232.500H771.500V249M847.500 279V287M907 279.500H924M925 280.500H970M970 279.500H986M577.500 580V577.500H625V580M950.500 594V636" />
        <path stroke="#5560c0" d="M804.500 309V318M807.500 309V318" />
        <path stroke="#e62ee6" strokeWidth="1.500" d="M831.500 457V318.500H841V457ZM919 513.500H944" />
        <path stroke="#e5d800" strokeWidth="2" d="M924 275V281M970 275V281" />
      </g>
      <path fill="url(#hatch)" d="M634 310h18v9h-10v10h-8zM832 278h9v40h-24v-9h15zM832 457h9v19h-9zM562 585h16v9h-6v10h-10zM633 574h9v20h-9zM714 585h9v20h-9z" />
      <path stroke="#f3e44e" d="M848 245C868 246 884 260 886 278M984 461C988 453 994 449 1000 447" />
      <path stroke="#7fdc8f" d="M978 247l5 6 5-6M764 507l5 6 5-6M981 521l6 6 6-6M960 606l5 5 5-5M690 595c14 0 22 2 23 10M745 636l18-21" />
      <g stroke="#2ed12e" fill="#fff">
        <path d="M478 271h6l4 4v7l-4 4h-6l-4-4v-7zM478 302h6l4 4v7l-4 4h-6l-4-4v-7zM478 577h6l4 4v7l-4 4h-6l-4-4v-7z" />
        <circle cx="876" cy="535" r="12" />
      </g>

      <g stroke="#d62ed6">
        <circle cx="579.500" cy="604" r="2.500" fill="#d62ed6" />
        <path d="M572 625.500h13M606 596h16v6h-16zM608 599h12" />
        <circle cx="587" cy="625.500" r="2" />
        <circle cx="629" cy="580" r="2" />
        <circle cx="828" cy="300" r="2" />
        <ellipse cx="614" cy="611" rx="8" ry="7" />
        <path d="M609 610c1-4 9-4 10 0l-3 8h-4z" />
        <path d="M943 513l2 8-1 14M943 514l4 14 3 2-4 5M945 520l-2 14M948 524l-3 11" strokeWidth="1.500" />
        <path d="M963 583V567.500h37" />
        <rect x="965" y="569" width="10" height="12" rx="2" />
        <rect x="977" y="569" width="10" height="12" rx="2" />
        <rect x="989" y="569" width="12" height="12" rx="2" />
        <path d="M969 575h2M981 575h2M994 575h2M979 583l3-5 3 5z" />
      </g>

      <g stroke="#222">
        <ellipse cx="666" cy="608" rx="10" ry="5.500" strokeWidth="1.300" />
        <path d="M666 600v9M662 603h8" strokeWidth="2" />
        <path d="M765 587.500H726.500V613H748C756 634 772 635 781 635S802 632 810 620" />
        <path d="M724 616h22c8 18 22 22 35 22" />
      </g>
      <circle cx="762" cy="603" r="8" stroke="#888" strokeWidth="3" strokeDasharray="1 2" />
      <circle cx="338" cy="371.500" r="23.700" stroke="#333" />
      <path d="M355 354.500L372 371.500 355 388.500C363 379 363 364 355 354.500z" fill="#000" />
      <path d="M336 372.500h4.500M377 371.500h5" stroke="#222" />

      <g fill="#111" textAnchor="middle" fontSize="7" fontWeight="700">
        {dims.map(([t, x, y], i) => (
          <text key={i} x={x} y={y}>{t}</text>
        ))}
      </g>
      <g fill="#000" textAnchor="middle" fontSize="7">
        {vertical.map(([t, x, y], i) => (
          <text key={i} transform={"translate(" + (x + 3) + " " + y + ") rotate(-90)"}>{t}</text>
        ))}
      </g>
      <g fill="#000" textAnchor="middle" fontSize="7" fontWeight="900">
        {notes.map(([t, x, y], i) => (
          <text key={i} x={x} y={y}>{t}</text>
        ))}
      </g>
      <g fill="#222" textAnchor="middle">
        <text x="808" y="303" fontSize="14" fontWeight="700">A/C</text>
        <text x="838" y="531" fontSize="11">98ZJ901</text>
        <text x="877" y="533" fontSize="11" fontWeight="700" fill="#1c7a1c">1</text>
        <g fontSize="12" fontWeight="700" className="font-['Liberation_Serif',serif]">
          <text x="481" y="282.500">G</text>
          <text x="481" y="313.500">F</text>
          <text x="481" y="588.500">D</text>
        </g>
      </g>
    </svg>
  );
}

function Brand() {
  return (
    <div className="absolute right-[55px] bottom-4 z-10 flex h-[85px] w-[180px] items-center gap-3 bg-[#213056] pl-[15px] text-[#d3d7df]">
      <svg className="h-9 w-[34px] shrink-0" viewBox="0 0 34 36" fill="none" aria-hidden="true">
        <path d="M7 4v22c0 3 2 4 4 3l19-9c3-2 3-5 0-7L13 3C10 1 7 2 7 5M2 6v22c0 5 4 7 8 5l3-2" stroke="#d3d7df" strokeWidth="3" strokeLinejoin="round" strokeLinecap="round" />
        <path d="M13 12l8 5-8 5zM22 13h2v8h-2z" fill="#d3d7df" />
      </svg>
      <div className="flex flex-col gap-1">
        <span className="text-[26px] leading-7 font-bold whitespace-nowrap">溜溜自学</span>
        <span className="text-[13px] leading-3.5 whitespace-nowrap">zixue.3D66.COM</span>
      </div>
    </div>
  );
}

export default function App() {
  return (
    <div className="relative flex h-screen w-full flex-col overflow-hidden bg-[#f0f0f0] font-['Noto_Sans','Noto_Sans_CJK_SC',sans-serif] text-xs">
      <Header />
      <Ribbon />
      <OptionsBar />
      <main className="flex min-h-0 flex-1">
        <Properties />
        <div className="ml-1 min-w-0 flex-1 overflow-hidden border-t border-l border-[#777] bg-white">
          <Plan />
        </div>
      </main>
      <Brand />
    </div>
  );
}
